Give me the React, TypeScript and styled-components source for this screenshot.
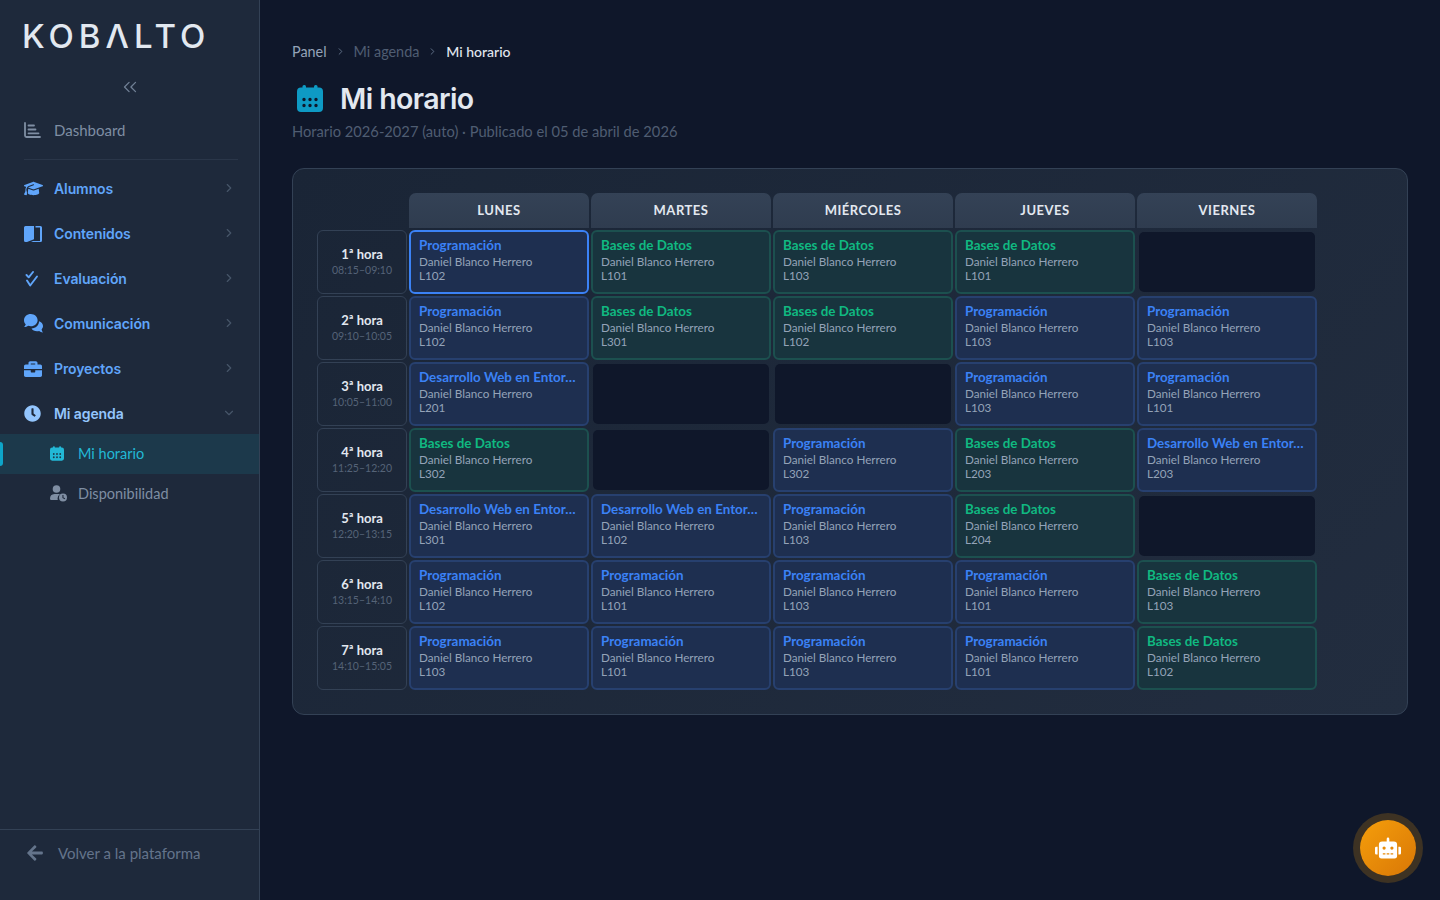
import { Fragment, ReactNode } from "react";
import styled, { createGlobalStyle } from "styled-components";
import { ChevronDown, ChevronRight, ChevronsLeft } from "lucide-react";
import { FaArrowLeft, FaBriefcase, FaClock, FaRobot } from "react-icons/fa";
import { FaGraduationCap } from "react-icons/fa6";

const GlobalStyle = createGlobalStyle`
  html, body {
    margin: 0;
    height: 100%;
    background: #0f172a;
    font-family: "Lato", "Liberation Sans", sans-serif;
  }
  * { box-sizing: border-box; }
`;

const Layout = styled.div`
  display: flex;
  height: 900px;
  overflow: hidden;
`;

const Sidebar = styled.aside`
  width: 260px;
  flex-shrink: 0;
  display: flex;
  flex-direction: column;
  background: #1e293b;
  border-right: 1px solid #334155;
`;

const Logo = styled.div`
  height: 70px;
  padding: 14px 0 0 22px;
  font-family: "Inter", sans-serif;
  font-size: 33px;
  line-height: 44px;
  font-weight: 500;
  letter-spacing: 5px;
  color: #e2e8f0;
`;

const Collapse = styled.div`
  height: 34px;
  display: flex;
  align-items: center;
  justify-content: center;
  color: #718096;
`;

const DashboardRow = styled.div`
  display: flex;
  align-items: center;
  gap: 13px;
  height: 40px;
  margin: 6px 21px 9px 24px;
  font-size: 15px;
  color: #7f8ea3;
`;

const Divider = styled.div`
  height: 1px;
  margin: 0 21px 6px 24px;
  background: #2a3649;
`;

const NavRow = styled.div<{ $open?: boolean }>`
  display: flex;
  align-items: center;
  height: 45px;
  margin-bottom: ${(p) => (p.$open ? "-2px" : "0")};
  padding: 0 24px;
  font-family: "Inter", sans-serif;
  font-size: 14px;
  font-weight: 600;
  letter-spacing: -0.1px;
  color: ${(p) => (p.$open ? "#93c5fd" : "#60a5fa")};
`;

const NavIcon = styled.span`
  width: 30px;
  flex-shrink: 0;
  display: flex;
  align-items: center;
`;

const NavLabel = styled.span`
  flex: 1;
`;

const NavCaret = styled.span`
  display: flex;
  margin: -2px -1px 0 0;
  color: #475569;
`;

const SubRow = styled.div<{ $active?: boolean }>`
  position: relative;
  display: flex;
  align-items: center;
  height: 40px;
  padding: 0 0 2px 50px;
  font-size: 14.5px;
  color: ${(p) => (p.$active ? "#22b8d6" : "#7f8ea3")};
  background: ${(p) => (p.$active ? "#1c394b" : "transparent")};

  &::before {
    content: "";
    display: ${(p) => (p.$active ? "block" : "none")};
    position: absolute;
    left: 0;
    top: 8px;
    width: 3px;
    height: 24px;
    border-radius: 0 3px 3px 0;
    background: #0ea5c9;
  }
`;

const SubIcon = styled.span`
  width: 28px;
  display: flex;
  align-items: center;
`;

const SidebarFooter = styled.div`
  margin-top: auto;
  height: 71px;
  padding: 0 24px 24px 26px;
  display: flex;
  align-items: center;
  gap: 14px;
  border-top: 1px solid #334155;
  font-size: 15px;
  color: #64748b;
`;

const Main = styled.main`
  flex: 1;
  padding: 42px 32px 0;
`;

const Breadcrumb = styled.nav`
  display: flex;
  align-items: center;
  height: 18px;
`;

const Crumb = styled.span<{ $tone: "mid" | "dim" | "light" }>`
  font-size: ${(p) => (p.$tone === "light" ? "14px" : "14.4px")};
  font-weight: ${(p) => (p.$tone === "light" ? 500 : 400)};
  color: ${(p) =>
    p.$tone === "light" ? "#e2e8f0" : p.$tone === "mid" ? "#94a3b8" : "#4f5d72"};
`;

const CrumbSep = styled.span`
  display: flex;
  margin: 0 8px;
  color: #64748b;
`;

const TitleRow = styled.div`
  display: flex;
  align-items: center;
  gap: 17px;
  margin: 18px 0 0 5px;
  height: 40px;
  color: #0e9ac4;
`;

const Title = styled.h1`
  margin: 0;
  font-family: "Inter", sans-serif;
  font-size: 28.5px;
  font-weight: 600;
  letter-spacing: -0.6px;
  color: #e2e8f0;
`;

const Subtitle = styled.p`
  margin: 3px 0 0;
  font-size: 14.7px;
  line-height: 20px;
  color: #4f5d72;
`;

const Panel = styled.section`
  margin-top: 27px;
  height: 547px;
  padding: 24px;
  border: 1px solid #334155;
  border-radius: 12px;
  background: linear-gradient(135deg, #1a2536, #222d3f);
`;

const Grid = styled.div`
  display: grid;
  grid-template-columns: 90px repeat(5, 180px);
  grid-template-rows: 35px repeat(7, 64px);
  gap: 2px;
`;

const DayHead = styled.div`
  display: flex;
  align-items: center;
  justify-content: center;
  padding-bottom: 2px;
  background: linear-gradient(180deg, #344256, #2f3c4f);
  border-radius: 7px 7px 0 0;
  font-size: 13px;
  font-weight: 700;
  letter-spacing: 0.5px;
  color: #e2e8f0;
`;

const TimeCell = styled.div`
  display: flex;
  flex-direction: column;
  align-items: center;
  justify-content: center;
  padding-bottom: 2px;
  border: 1px solid #334155;
  border-radius: 6px;
`;

const TimeLabel = styled.span`
  font-size: 13px;
  font-weight: 700;
  line-height: 17px;
  color: #e2e8f0;
`;

const TimeRange = styled.span`
  font-size: 10.5px;
  line-height: 14px;
  color: #556377;
`;

const Lesson = styled.div<{ $kind: "blue" | "green"; $selected?: boolean }>`
  padding: 5px 8px;
  border-radius: 6px;
  border: 2px solid
    ${(p) =>
      p.$selected ? "#3b82f6" : p.$kind === "blue" ? "#27406f" : "#1c504f"};
  background: ${(p) => (p.$kind === "blue" ? "#1e2f50" : "#18343e")};
`;

const Subject = styled.div<{ $kind: "blue" | "green" }>`
  margin-bottom: 1px;
  font-size: 13.4px;
  font-weight: 700;
  line-height: 16px;
  white-space: nowrap;
  color: ${(p) => (p.$kind === "blue" ? "#3b82f6" : "#10b981")};
`;

const Detail = styled.div`
  font-size: 11.7px;
  line-height: 14px;
  color: #94a3b8;
`;

const EmptySlot = styled.div`
  margin: 2px;
  border-radius: 5px;
  background: #0f172a;
`;

const Fab = styled.button`
  position: fixed;
  right: 24px;
  bottom: 24px;
  width: 56px;
  height: 56px;
  display: flex;
  align-items: center;
  justify-content: center;
  padding: 0;
  border: none;
  border-radius: 50%;
  color: #fff;
  font-size: 26px;
  background: linear-gradient(135deg, #f59e0b, #d97706);
  box-shadow: 0 0 0 7px rgba(245, 158, 11, 0.2);
`;

const dot = (x: number, y: number) =>
  `M${x - 1.7} ${y}a1.7 1.7 0 1 0 3.4 0a1.7 1.7 0 1 0 -3.4 0Z`;

const CalendarIcon = ({ width, height }: { width: number; height: number }) => (
  <svg width={width} height={height} viewBox="0 0 26 27" fill="currentColor">
    <rect x="5.500" y="0" width="3.500" height="6" rx="1.500" />
    <rect x="17" y="0" width="3.500" height="6" rx="1.500" />
    <path
      fillRule="evenodd"
      d={
        "M4 2.500H22a4 4 0 0 1 4 4V23a4 4 0 0 1-4 4H4a4 4 0 0 1-4-4V6.500a4 4 0 0 1 4-4Z" +
        [7, 13, 19].map((x) => dot(x, 14.5) + dot(x, 20.5)).join("")
      }
    />
  </svg>
);

const DashboardIcon = () => (
  <svg width="17" height="16" viewBox="0 0 17 16" fill="none" stroke="currentColor" strokeLinecap="round">
    <path d="M1 1v12.500a1.500 1.500 0 0 0 1.500 1.500H16" strokeWidth="1.800" />
    <path d="M4.500 3.500H10M4.500 7.500h7M4.500 11.300h10" strokeWidth="1.800" />
  </svg>
);

const BookIcon = () => (
  <svg width="18" height="16" viewBox="0 0 18 16" fill="currentColor">
    <path d="M1.500 0H10v13.200L3 16H1.500A1.500 1.500 0 0 1 0 14.500V1.500A1.500 1.500 0 0 1 1.500 0Z" />
    <path d="M11.500 0h5A1.500 1.500 0 0 1 18 1.500v13a1.500 1.500 0 0 1-1.500 1.500H7l2-1h7V1.500h-4.500Z" />
  </svg>
);

const ChecksIcon = () => (
  <svg width="15" height="16" viewBox="0 0 15 16" fill="none" stroke="currentColor" strokeWidth="1.900" strokeLinecap="round" strokeLinejoin="round">
    <path d="M2.500 4l2.200 2.300L9 1" />
    <path d="M3 9.500l3.200 5L13 5.500" />
  </svg>
);

const ChatIcon = () => (
  <svg width="19" height="19" viewBox="0 0 19 19" fill="currentColor">
    <path d="M6.800 0C3 0 0 2.700 0 6.200c0 1.600.6 3 1.700 4.100C1.500 11.400.8 12.300 0 13c1.700 0 3.100-.5 4.200-1.300.8.300 1.700.5 2.600.5 3.800 0 6.800-2.700 6.800-6S10.600 0 6.800 0Z" />
    <path
      d="M15 7.300c2.300.7 4 2.600 4 4.800 0 1.300-.5 2.400-1.400 3.300.2 1.200.8 2.300 1.400 3.100-1.600-.2-2.900-.8-3.900-1.600-.7.200-1.400.3-2.100.3-2.400 0-4.500-1.100-5.500-2.800 4.300-.2 7.600-2.900 7.500-7.100Z"
    />
  </svg>
);

const UserClockIcon = () => (
  <svg width="17" height="17" viewBox="0 0 17 17" fill="currentColor">
    <circle cx="6.500" cy="4" r="3.800" />
    <path d="M4.500 9h4c.5 0 1 .1 1.400.2A5.400 5.400 0 0 0 7.800 15H1.200A1.200 1.200 0 0 1 0 13.800 4.800 4.800 0 0 1 4.500 9Z" />
    <path
      fillRule="evenodd"
      d="M13 8.500a4 4 0 1 1 0 8a4 4 0 0 1 0-8ZM12.400 10v3l2.300 1.200.5-.9-1.700-.9V10Z"
    />
  </svg>
);

type Kind = "P" | "B" | "D" | null;
const subjects = {
  P: { name: "Programación", kind: "blue" as const },
  B: { name: "Bases de Datos", kind: "green" as const },
  D: { name: "Desarrollo Web en Entor…", kind: "blue" as const },
};

const days = ["LUNES", "MARTES", "MIÉRCOLES", "JUEVES", "VIERNES"];

const schedule: { label: string; time: string; cells: [Kind, string][] }[] = [
  { label: "1ª hora", time: "08:15–09:10", cells: [["P", "L102"], ["B", "L101"], ["B", "L103"], ["B", "L101"], [null, ""]] },
  { label: "2ª hora", time: "09:10–10:05", cells: [["P", "L102"], ["B", "L301"], ["B", "L102"], ["P", "L103"], ["P", "L103"]] },
  { label: "3ª hora", time: "10:05–11:00", cells: [["D", "L201"], [null, ""], [null, ""], ["P", "L103"], ["P", "L101"]] },
  { label: "4ª hora", time: "11:25–12:20", cells: [["B", "L302"], [null, ""], ["P", "L302"], ["B", "L203"], ["D", "L203"]] },
  { label: "5ª hora", time: "12:20–13:15", cells: [["D", "L301"], ["D", "L102"], ["P", "L103"], ["B", "L204"], [null, ""]] },
  { label: "6ª hora", time: "13:15–14:10", cells: [["P", "L102"], ["P", "L101"], ["P", "L103"], ["P", "L101"], ["B", "L103"]] },
  { label: "7ª hora", time: "14:10–15:05", cells: [["P", "L103"], ["P", "L101"], ["P", "L103"], ["P", "L101"], ["B", "L102"]] },
];

const navItems: { label: string; icon: ReactNode }[] = [
  { label: "Alumnos", icon: <FaGraduationCap size={19} /> },
  { label: "Contenidos", icon: <BookIcon /> },
  { label: "Evaluación", icon: <ChecksIcon /> },
  { label: "Comunicación", icon: <ChatIcon /> },
  { label: "Proyectos", icon: <FaBriefcase size={18} /> },
];

export default function App() {
  return (
    <Layout>
      <GlobalStyle />
      <Sidebar>
        <Logo>KOBΛLTO</Logo>
        <Collapse>
          <ChevronsLeft size={22} strokeWidth={1.4} />
        </Collapse>
        <DashboardRow>
          <DashboardIcon />
          Dashboard
        </DashboardRow>
        <Divider />
        {navItems.map((item) => (
          <NavRow key={item.label}>
            <NavIcon>{item.icon}</NavIcon>
            <NavLabel>{item.label}</NavLabel>
            <NavCaret>
              <ChevronRight size={14} strokeWidth={2} />
            </NavCaret>
          </NavRow>
        ))}
        <NavRow $open>
          <NavIcon>
            <FaClock size={17} />
          </NavIcon>
          <NavLabel>Mi agenda</NavLabel>
          <NavCaret>
            <ChevronDown size={14} strokeWidth={2} />
          </NavCaret>
        </NavRow>
        <SubRow $active>
          <SubIcon>
            <CalendarIcon width={14} height={15} />
          </SubIcon>
          Mi horario
        </SubRow>
        <SubRow>
          <SubIcon>
            <UserClockIcon />
          </SubIcon>
          Disponibilidad
        </SubRow>
        <SidebarFooter>
          <FaArrowLeft size={18} />
          Volver a la plataforma
        </SidebarFooter>
      </Sidebar>
      <Main>
        <Breadcrumb>
          <Crumb $tone="mid">Panel</Crumb>
          <CrumbSep>
            <ChevronRight size={11} />
          </CrumbSep>
          <Crumb $tone="dim">Mi agenda</Crumb>
          <CrumbSep>
            <ChevronRight size={11} />
          </CrumbSep>
          <Crumb $tone="light">Mi horario</Crumb>
        </Breadcrumb>
        <TitleRow>
          <CalendarIcon width={26} height={27} />
          <Title>Mi horario</Title>
        </TitleRow>
        <Subtitle>Horario 2026-2027 (auto) · Publicado el 05 de abril de 2026</Subtitle>
        <Panel>
          <Grid>
            <div />
            {days.map((d) => (
              <DayHead key={d}>{d}</DayHead>
            ))}
            {schedule.map((row, r) => (
              <Fragment key={row.time}>
                <TimeCell>
                  <TimeLabel>{row.label}</TimeLabel>
                  <TimeRange>{row.time}</TimeRange>
                </TimeCell>
                {row.cells.map(([k, room], c) =>
                  k ? (
                    <Lesson key={c} $kind={subjects[k].kind} $selected={r === 0 && c === 0}>
                      <Subject $kind={subjects[k].kind}>{subjects[k].name}</Subject>
                      <Detail>Daniel Blanco Herrero</Detail>
                      <Detail>{room}</Detail>
                    </Lesson>
                  ) : (
                    <EmptySlot key={c} />
                  )
                )}
              </Fragment>
            ))}
          </Grid>
        </Panel>
      </Main>
      <Fab aria-label="Asistente">
        <FaRobot />
      </Fab>
    </Layout>
  );
}
